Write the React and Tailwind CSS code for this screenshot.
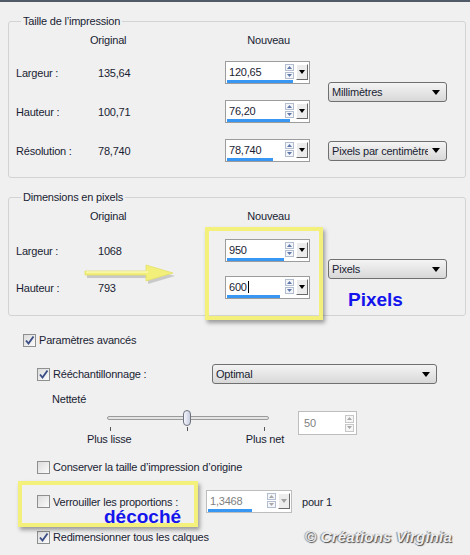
import React from 'react';

const Check = ({ on }) => (
  <span className="flex h-[13px] w-[13px] shrink-0 items-center justify-center border border-[#8e8f8f] bg-linear-to-br from-[#dcdcdc] to-[#fbfbfb]">
    {on && (
      <svg width="11" height="11" viewBox="0 0 11 11">
        <path d="M2 5.5 L4.5 8.5 L9.5 1.5" fill="none" stroke="#3a4d86" strokeWidth="1.9" />
      </svg>
    )}
  </span>
);

const Spin = ({ value, bar, disabled, caret, className }) => (
  <div
    className={`flex h-[23px] flex-col border bg-white ${
      disabled ? 'border-[#bdbdbd] text-[#808080]' : 'border-[#9c9c9c]'
    } ${className}`}
  >
    <div className="flex h-[18px] items-center pl-[3px] pr-[1px] pt-[1px]">
      <span className="flex flex-1 items-center">
        {value}
        {caret && <span className="ml-px inline-block h-[12px] w-px bg-black" />}
      </span>
      <div className="mr-[2px] flex flex-col gap-px">
        <span className="flex h-[7px] w-[9px] items-center justify-center border border-[#b3bdd0] bg-[#f4f6fa]">
          <svg width="5" height="3"><path d="M0 3h5L2.5 0z" fill={disabled ? '#a8a8a8' : '#5e76a8'} /></svg>
        </span>
        <span className="flex h-[7px] w-[9px] items-center justify-center border border-[#b3bdd0] bg-[#f4f6fa]">
          <svg width="5" height="3"><path d="M0 0h5L2.5 3z" fill={disabled ? '#a8a8a8' : '#5e76a8'} /></svg>
        </span>
      </div>
      <span className="flex h-[16px] w-[12px] items-center justify-center border-b border-l border-r border-t border-b-[#696969] border-l-white border-r-[#696969] border-t-white bg-[#ececec]">
        <svg width="6" height="4"><path d="M0 0h6L3 4z" fill={disabled ? '#a0a0a0' : '#000'} /></svg>
      </span>
    </div>
    <div className="ml-px h-[3px] bg-[#3797f2]" style={{ width: bar }} />
  </div>
);

const Select = ({ label, className }) => (
  <div
    className={`flex h-[20px] items-center justify-between rounded-[3px] border border-[#707070] bg-linear-to-b from-[#f4f4f4] to-[#d8d8d8] pl-[3px] pr-[6px] ${className}`}
  >
    <span className="w-[96px] overflow-hidden whitespace-nowrap">{label}</span>
    <svg width="8" height="5"><path d="M0 0h8L4 5z" fill="#000" /></svg>
  </div>
);

const App = () => {
  return (
    <div className="relative h-[555px] w-[470px] overflow-hidden bg-[#f0f0f0] font-['Liberation_Sans',Arial,sans-serif] text-[11px] leading-[14px] tracking-[-0.2px] text-[#1a1d33]">
      <div className="h-[2px] bg-[#505b67]" />

      {/* Taille de l'impression */}
      <fieldset className="ml-[8px] mt-[12px] w-[458px] rounded-[3px] border border-[#d3d3d3] pb-[15px] pl-[7px]">
        <legend className="ml-[5px] px-[2px]">Taille de l’impression</legend>
        <div className="flex pt-[5px]">
          <span className="ml-[74px]">Original</span>
          <span className="ml-[121px]">Nouveau</span>
        </div>
        <div className="mt-[14px] grid grid-cols-[82px_127px_85px_137px] grid-rows-[23px_23px_23px] gap-y-[16px]">
          <span className="self-center">Largeur :</span>
          <span className="self-center">135,64</span>
          <Spin value="120,65" bar={66} className="w-[85px]" />
          <div className="row-span-2 ml-[18px] self-center">
            <Select label="Millimètres" className="w-[119px]" />
          </div>
          <span className="self-center">Hauteur :</span>
          <span className="self-center">100,71</span>
          <Spin value="76,20" bar={63} className="w-[85px]" />
          <span className="self-center">Résolution :</span>
          <span className="self-center">78,740</span>
          <Spin value="78,740" bar={46} className="w-[85px]" />
          <div className="ml-[18px] self-center">
            <Select label="Pixels par centimètre" className="w-[119px]" />
          </div>
        </div>
      </fieldset>

      {/* Dimensions en pixels */}
      <fieldset className="ml-[8px] mt-[12px] w-[458px] rounded-[3px] border border-[#d3d3d3] pb-[16px] pl-[7px]">
        <legend className="ml-[5px] px-[2px]">Dimensions en pixels</legend>
        <div className="flex pt-[5px]">
          <span className="ml-[74px]">Original</span>
          <span className="ml-[121px]">Nouveau</span>
        </div>
        <div className="mt-[16px] grid grid-cols-[82px_127px_85px_137px] grid-rows-[23px_23px] gap-y-[14px]">
          <span className="self-center">Largeur :</span>
          <span className="self-center">1068</span>
          <Spin value="950" bar={57} className="w-[85px]" />
          <div className="row-span-2 ml-[18px] self-center">
            <Select label="Pixels" className="w-[119px]" />
          </div>
          <span className="self-center">Hauteur :</span>
          <span className="self-center">793</span>
          <Spin value="600" bar={53} caret className="w-[85px]" />
        </div>
      </fieldset>

      <div className="mt-[17px] flex h-[14px] items-center gap-[3px] pl-[23px]">
        <Check on />
        <span>Paramètres avancés</span>
      </div>

      <div className="mt-[17px] flex h-[20px] items-center pl-[37px]">
        <div className="flex w-[175px] items-center gap-[3px]">
          <Check on />
          <span>Rééchantillonnage :</span>
        </div>
        <Select label="Optimal" className="w-[225px]" />
      </div>

      <div className="mt-[8px] pl-[52px]">Netteté</div>

      <div className="mt-[4px] flex pl-[107px]">
        <div className="w-[162px]">
          <div className="relative h-[16px]">
            <div className="absolute left-0 right-0 top-[6px] h-[4px] rounded-full border border-[#9b9b9b] bg-[#e4e4e4]" />
            <div className="absolute left-[76px] top-0 h-[16px] w-[8px] rounded-[4px] border border-[#6f7380] bg-linear-to-r from-[#f4f5fb] to-[#c9cedf]" />
          </div>
          <div className="mt-px flex h-[4px] gap-[76px] pl-[3px]">
            <span className="w-px bg-[#555]" />
            <span className="w-px bg-[#555]" />
            <span className="w-px bg-[#555]" />
          </div>
          <div className="-ml-[20px] mt-px flex w-[197px] justify-between">
            <span>Plus lisse</span>
            <span>Plus net</span>
          </div>
        </div>
        <div className="ml-[29px] mt-px flex h-[24px] w-[59px] items-center border border-[#bdbdbd] bg-white pl-[5px] pr-[2px] text-[#808080]">
          <span className="flex-1">50</span>
          <div className="flex flex-col gap-px">
            <span className="flex h-[8px] w-[9px] items-center justify-center border border-[#c7c7c7] bg-[#f6f6f6]">
              <svg width="5" height="3"><path d="M0 3h5L2.5 0z" fill="#a8a8a8" /></svg>
            </span>
            <span className="flex h-[8px] w-[9px] items-center justify-center border border-[#c7c7c7] bg-[#f6f6f6]">
              <svg width="5" height="3"><path d="M0 0h5L2.5 3z" fill="#a8a8a8" /></svg>
            </span>
          </div>
        </div>
      </div>

      <div className="mt-[14px] flex h-[14px] items-center gap-[3px] pl-[37px]">
        <Check />
        <span>Conserver la taille d’impression d’origine</span>
      </div>

      <div className="mt-[16px] flex h-[23px] items-center pl-[37px]">
        <div className="flex w-[169px] items-center gap-[3px]">
          <Check />
          <span>Verrouiller les proportions :</span>
        </div>
        <Spin value="1,3468" bar={44} disabled className="w-[86px]" />
        <span className="ml-[10px]">pour 1</span>
      </div>

      <div className="mt-[17px] flex h-[14px] items-center gap-[3px] pl-[37px]">
        <Check on />
        <span>Redimensionner tous les calques</span>
      </div>

      {/* annotations */}
      <div className="absolute left-[205px] top-[227px] h-[93px] w-[118px] border-[4px] border-[#f3f17c] shadow-[2px_3px_4px_rgba(0,0,0,0.35)]" />
      <div className="absolute left-[18px] top-[481px] h-[46px] w-[180px] border-[4px] border-[#f3f17c] shadow-[2px_3px_4px_rgba(0,0,0,0.35)]" />

      <svg className="absolute left-[82px] top-[262px]" width="96" height="24" viewBox="0 0 96 24">
        <path d="M4 10 H65 V4 L92 12 L65 20 V14 H4 Z" fill="#9a9a9a" opacity="0.45" transform="translate(1 2)" />
        <path d="M3 9 H64 V3 L91 11 L64 19 V13 H3 Z" fill="#f2f07a" stroke="#e3e06a" strokeWidth="0.8" />
        <path d="M4 10 H66" stroke="#fbfbd8" strokeWidth="1.2" />
      </svg>

      <span className="absolute left-[348px] top-[289px] text-[19px] font-bold leading-[22px] tracking-normal text-[#1414ec]">
        Pixels
      </span>
      <span className="absolute left-[104px] top-[506px] text-[19px] font-bold leading-[22px] tracking-normal text-[#1414ec]">
        décoché
      </span>

      <span className="absolute left-[305px] top-[528px] text-[15px] font-bold italic leading-[18px] tracking-[0.2px] text-[#efefef] [text-shadow:1px_1px_1px_#4a4a4a,-1px_0_1px_#8a8a8a]">
        © Créations Virginia
      </span>
    </div>
  );
};

export default App;
